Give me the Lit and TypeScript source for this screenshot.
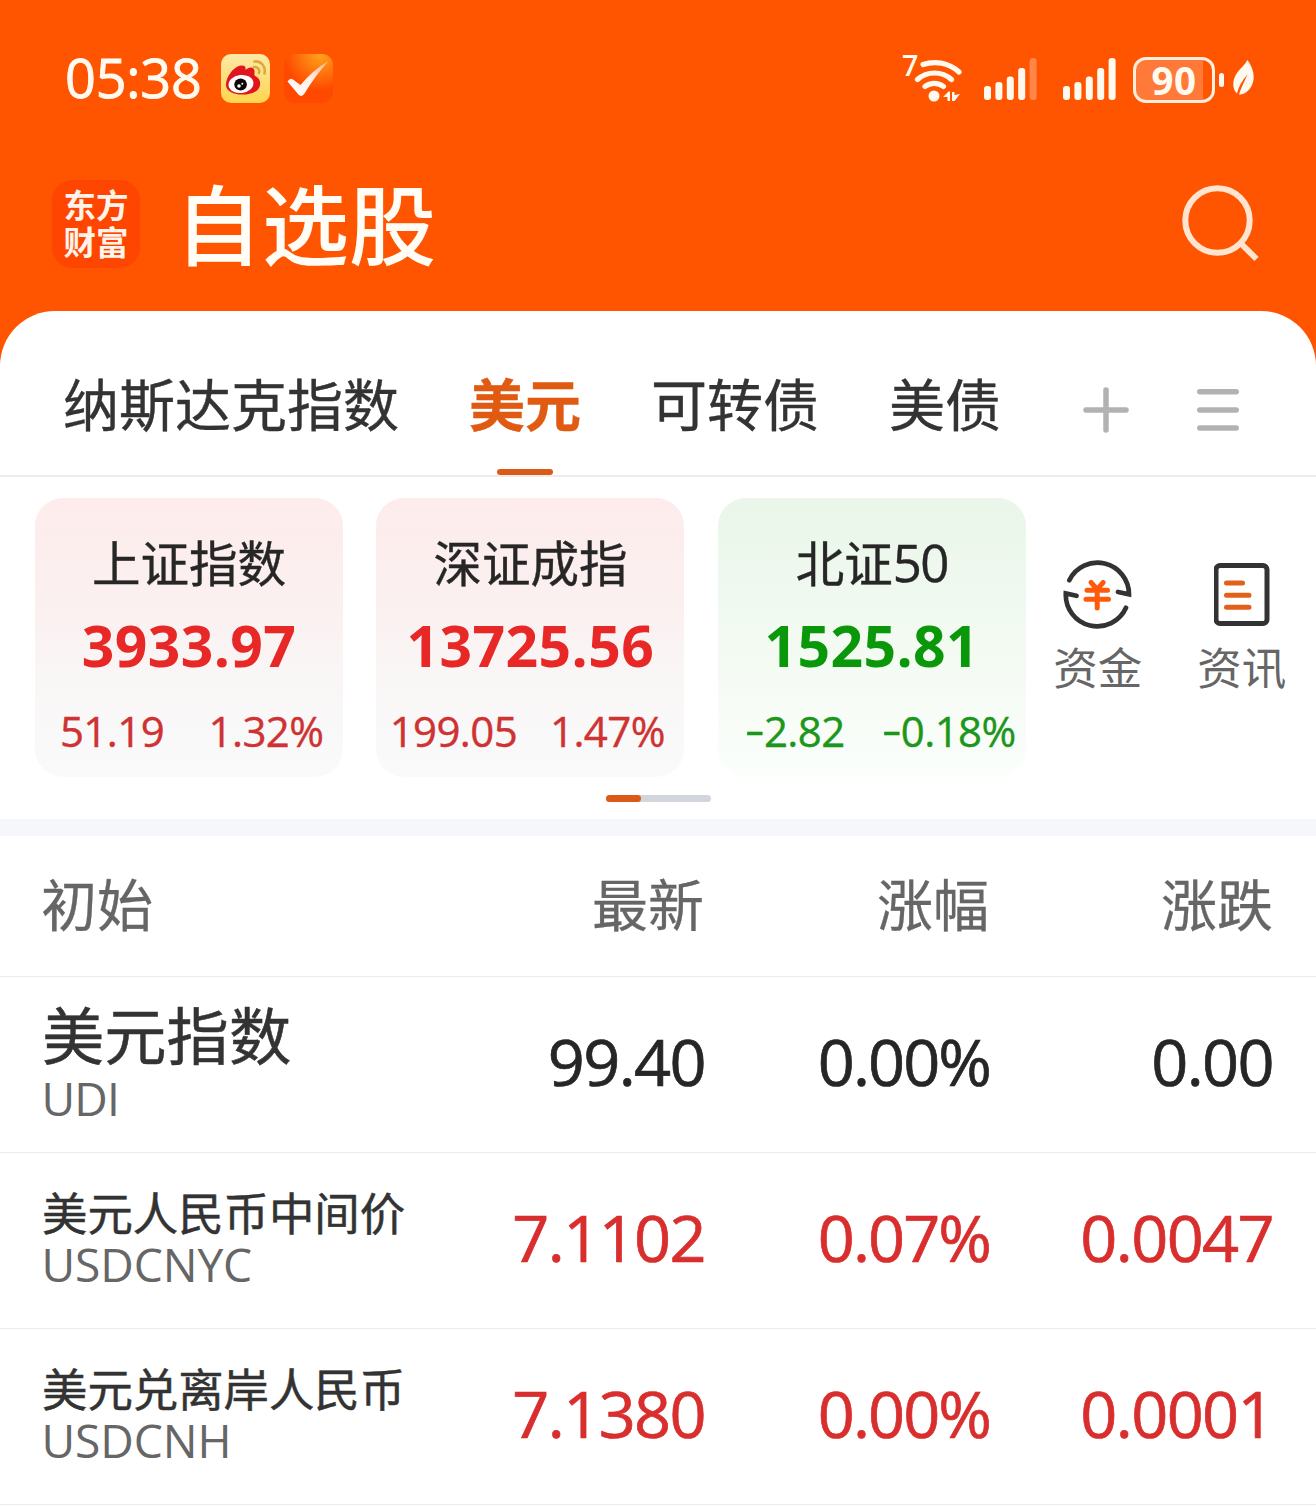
import { LitElement, html, css, svg } from "lit";
import { customElement, property } from "lit/decorators.js";
import { classMap } from "lit/directives/class-map.js";

interface IndexCard { name: string; digits?: string; value: string; change: string; percent: string; down?: boolean }
interface Quote { name: string; code: string; last: string; percent: string; change: string; up?: boolean; large?: boolean }

const TABS = ["纳斯达克指数", "美元", "可转债", "美债"];
const ACTIVE_TAB = "美元";

const CARDS: IndexCard[] = [
  { name: "上证指数", value: "3933.97", change: "51.19", percent: "1.32%" },
  { name: "深证成指", value: "13725.56", change: "199.05", percent: "1.47%" },
  { name: "北证", digits: "50", value: "1525.81", change: "-2.82", percent: "-0.18%", down: true },
];

const COLUMNS = ["初始", "最新", "涨幅", "涨跌"];

const QUOTES: Quote[] = [
  { name: "美元指数", code: "UDI", last: "99.40", percent: "0.00%", change: "0.00", large: true },
  { name: "美元人民币中间价", code: "USDCNYC", last: "7.1102", percent: "0.07%", change: "0.0047", up: true },
  { name: "美元兑离岸人民币", code: "USDCNH", last: "7.1380", percent: "0.00%", change: "0.0001", up: true },
];

const signal = (faint: boolean) => html`
  <svg width="53" height="43" viewBox="0 0 53 43" fill="#fffaf0">
    ${[29, 25, 19.5, 11, 1].map((top, i) => svg`<rect x=${i * 11.4} y=${top} width="7" height=${43 - top} rx="3" opacity=${faint && i === 4 ? 0.3 : 1}></rect>`)}
  </svg>`;

@customElement("status-bar")
export class StatusBar extends LitElement {
  static styles = css`
    :host { display: flex; align-items: center; height: 156px; padding: 0 61px 0 65px; color: #fffaf0; }
    svg { display: block; flex: none; }
    .time { width: 156px; font-size: 54px; line-height: 64px; letter-spacing: -0.2px; margin-top: -3px; -webkit-text-stroke: 0.9px; }
    .app { margin-right: 14px; }
    .space { flex: 1; }
    .wifi { margin-right: 22px; }
    .signal { margin-right: 26px; }
    .signal.second { margin-right: 17px; }
    .battery { box-sizing: border-box; width: 82px; height: 46px; border: 3.5px solid #ffeedc; border-radius: 13px; margin-top: 4px;
      background: linear-gradient(90deg, rgba(255,255,255,.22) 67px, transparent 67px); display: flex; justify-content: center; }
    .level { font-size: 38.5px; font-weight: 700; line-height: 40px; letter-spacing: 0.5px; }
    .nub { width: 5px; height: 14px; border-radius: 3px; background: #fffaf0; margin: 3px 8px 0 4px; }
  `;
  render() {
    return html`
      <span class="time">05:38</span>
      <svg class="app" width="49" height="49" viewBox="0 0 49 49">
        <defs><linearGradient id="y" x1="0" y1="0" x2="0" y2="1"><stop offset="0" stop-color="#fde9a8"></stop><stop offset="1" stop-color="#ffd44f"></stop></linearGradient></defs>
        <rect width="49" height="49" rx="10" fill="url(#y)"></rect>
        <path d="M5 31C5 23 13 12 20 11.500c4-.3 5 1.500 4.500 4.500C28 12 34 12.500 33.500 18c0 2-.3 3.500.8 4 6.500 3 6 11 1.700 14.500C27 43.500 5 41.500 5 31z" fill="#e0151d"></path>
        <ellipse cx="20" cy="30" rx="12.500" ry="9" fill="#fff" transform="rotate(-7 20 30)"></ellipse>
        <ellipse cx="19.600" cy="30.500" rx="6.300" ry="5.900" fill="#0c0606"></ellipse>
        <circle cx="18" cy="32" r="1.800" fill="#fff"></circle><circle cx="21.300" cy="29.700" r="1" fill="#fff"></circle>
        <g fill="none" stroke="#dca93c" stroke-width="2.600" stroke-linecap="round"><path d="M33.500 7.500C40 6.500 45 12.500 43.500 19.500"></path><path d="M33 13C36.500 12.500 39 15.500 38 18.800"></path></g>
      </svg>
      <svg class="app" width="49" height="49" viewBox="0 0 49 49">
        <defs>
          <radialGradient id="o" cx=".75" cy="0" r=".75"><stop offset="0" stop-color="#ffa51c"></stop><stop offset="1" stop-color="#ff4800"></stop></radialGradient>
          <linearGradient id="c" x1="1" y1="0" x2="0" y2="1"><stop offset="0" stop-color="#ffb48c"></stop><stop offset=".5" stop-color="#fff0e8"></stop><stop offset="1" stop-color="#fff"></stop></linearGradient>
        </defs>
        <rect width="49" height="49" rx="11" fill="url(#o)"></rect>
        <path d="M3.500 27.500Q6 23.500 9 25.500L16.500 31Q29 16 44.500 7 31 22 20.500 39.500 17.500 44 14 40z" fill="url(#c)"></path>
      </svg>
      <span class="space"></span>
      <svg class="wifi" width="62" height="60" viewBox="0 -3 62 60" fill="none" stroke="#fffaf0" stroke-width="5.200" stroke-linecap="round">
        <circle cx="34" cy="45" r="5.500" fill="#fffaf0" stroke="none"></circle>
        <path d="M25 35.500A15.200 15.200 0 0 1 43.500 35.500M17.500 28.500A25.500 25.500 0 0 1 51.500 28.500M23 13.500A36 36 0 0 1 59 21"></path>
        <path d="M43 46l5.500-5.500h1.500v9.500h-2.500v-4zM52 41l2.500 0 0 3 5.500-1-5.500 7h-2.500z" fill="#fffaf0" stroke="none"></path>
        <text x="2" y="25" font-size="28.500" font-weight="600" fill="#fffaf0" stroke="none">7</text>
      </svg>
      <span class="signal">${signal(true)}</span>
      <span class="signal second">${signal(false)}</span>
      <span class="battery"><span class="level">90</span></span>
      <span class="nub"></span>
      <svg width="23" height="36" viewBox="0 0 23 36" fill="#fffaf0">
        <path d="M15.500 0C21 8 24 17 19.500 26 16.500 32 11.500 34.500 7 34.500 9 28 12 22 15.500 14.500 10 20 6.500 27 5 33.500 0 29 0 20 5 13 8 8.500 13 5 15.500 0z"></path>
      </svg>`;
  }
}

@customElement("index-card")
export class IndexCardView extends LitElement {
  @property({ attribute: false }) card!: IndexCard;
  static styles = css`
    :host { display: block; flex: none; width: 308px; height: 279px; text-align: center; }
    .card { box-sizing: border-box; height: 100%; padding-top: 35px; border-radius: 28px; color: #dd2a2a;
      background: linear-gradient(180deg, #fdeceb 0%, #fbf0f0 38%, #f9f7f6 66%, #fafafb 100%); }
    .card.down { color: #149614; background: linear-gradient(180deg, #eaf6ea 0%, #f2faf1 50%, #fbfefb 100%); }
    .name { font-size: 48.5px; line-height: 60px; color: #262626; white-space: nowrap; -webkit-text-stroke: 0.4px; }
    .digits { font-size: 51px; letter-spacing: -1.6px; line-height: 1px; }
    .value { margin-top: 17px; font-size: 57px; line-height: 70px; font-weight: 700; letter-spacing: 0.4px; color: #e82727; }
    .down .value { color: #0a980a; }
    .pair { display: grid; grid-template-columns: 1fr 1fr; margin-top: 26px; font-size: 42px; line-height: 50px; letter-spacing: -0.6px; color: #cf3232; -webkit-text-stroke: 0.4px; }
    .down .pair { color: #1c961c; }
    .pair span { display: flex; justify-content: center; white-space: nowrap; }
    .minus { transform: translateY(-2px) scaleX(1.45); margin: 0 3px; font-style: normal; }
  `;
  private signed(text: string) {
    return html`<span>${text.startsWith("-") ? html`<i class="minus">-</i>${text.slice(1)}` : text}</span>`;
  }
  render() {
    const c = this.card;
    return html`
      <div class=${classMap({ card: true, down: !!c.down })}>
        <div class="name">${c.name}${c.digits ? html`<span class="digits">${c.digits}</span>` : ""}</div>
        <div class="value">${c.value}</div>
        <div class="pair">${this.signed(c.change)}${this.signed(c.percent)}</div>
      </div>`;
  }
}

@customElement("quote-row")
export class QuoteRow extends LitElement {
  @property({ attribute: false }) quote!: Quote;
  static styles = css`
    :host { display: block; }
    .row { display: grid; grid-template-columns: 406px 257px 285px 283px; height: 175px; padding-left: 42px; border-bottom: 1px solid #ebebeb; color: #262626; }
    .title { padding-top: 34px; white-space: nowrap; color: #333; }
    .name { font-size: 45.4px; line-height: 52px; -webkit-text-stroke: 0.5px; }
    .code { font-size: 46.2px; line-height: 52px; color: #666; margin-left: -0.5px; letter-spacing: -0.1px; }
    .large .title { padding-top: 23px; }
    .large .name { font-size: 62.3px; line-height: 72px; }
    .large .code { line-height: 54px; letter-spacing: -0.9px; }
    .num { font-size: 64.8px; line-height: 168px; letter-spacing: -1.6px; text-align: right; -webkit-text-stroke: 0.7px; }
    .up .num { color: #d92e2e; }
    .pct { letter-spacing: -1.9px; }
  `;
  render() {
    const q = this.quote;
    return html`
      <div class=${classMap({ row: true, up: !!q.up, large: !!q.large })}>
        <div class="title"><div class="name">${q.name}</div><div class="code">${q.code}</div></div>
        <div class="num">${q.last}</div>
        <div class="num pct">${q.percent}</div>
        <div class="num">${q.change}</div>
      </div>`;
  }
}

@customElement("app-root")
export class AppRoot extends LitElement {
  static styles = css`
    :host { display: block; width: 1316px; height: 1508px; overflow: hidden; background: #ff5500; font-family: "Open Sans", "Noto Sans CJK SC", sans-serif; }
    svg { display: block; flex: none; }
    .titlebar { display: flex; align-items: center; height: 136px; padding: 0 57px 0 52px; }
    .logo { display: flex; flex-direction: column; align-items: center; justify-content: center; width: 88px; height: 88px; border-radius: 20px; background: #ff4600;
      color: #fff3ea; font-size: 32.5px; font-weight: 700; line-height: 37px; }
    .heading { flex: 1; margin: 2px 0 0 35px; font-size: 87px; line-height: 100px; font-weight: 500; color: #fffdf5; }
    .sheet { margin-top: 19px; height: 1197px; border-radius: 55px 55px 0 0; background: #fff; }
    .tabs { display: flex; height: 164px; padding-left: 63px; border-bottom: 2px solid #ececec; gap: 70px; color: #333; font-size: 56px; }
    .tab { display: flex; flex-direction: column; align-items: center; justify-content: space-between; white-space: nowrap; line-height: 80px; padding-top: 53px; -webkit-text-stroke: 0.4px; }
    .tab.active { color: #e05a12; font-weight: 700; }
    .bar { width: 56px; height: 6px; border-radius: 3px; background: #dc5a18; }
    .tools { display: flex; gap: 68px; padding: 76px 0 0 12px; }
    .indices { display: flex; gap: 33.4px; padding: 21px 0 0 35px; }
    .shortcuts { display: flex; margin-left: -33.4px; padding-top: 61px; }
    .shortcut { display: flex; flex-direction: column; align-items: center; width: 144px; font-size: 44.5px; line-height: 60px; color: #666; }
    .shortcut svg { height: 70px; margin-bottom: 9px; }
    .pager { width: 105px; height: 7px; margin: 18px 0 17px 606px; border-radius: 4px; background: #d2d6dc; }
    .page { width: 35px; height: 7px; border-radius: 4px; background: #dc5a18; }
    .band { height: 17px; background: #f5f7fa; }
    .head { display: grid; grid-template-columns: 406px 257px 285px 284px; height: 140px; padding-left: 41px; border-bottom: 1px solid #ebebeb; font-size: 56px; line-height: 137px; color: #666; -webkit-text-stroke: 0.3px; }
    .head span + span { text-align: right; }
  `;
  render() {
    return html`
      <status-bar></status-bar>
      <div class="titlebar">
        <div class="logo"><span>东方</span><span>财富</span></div>
        <div class="heading">自选股</div>
        <svg width="78" height="78" viewBox="0 0 78 78" fill="none" stroke="#ffe4d0" stroke-width="6">
          <circle cx="36.500" cy="35.500" r="32.200"></circle><path d="M59 57.500L75.500 74"></path>
        </svg>
      </div>
      <div class="sheet">
        <div class="tabs">
          ${TABS.map((t) => html`<div class=${classMap({ tab: true, active: t === ACTIVE_TAB })}>${t}${t === ACTIVE_TAB ? html`<span class="bar"></span>` : ""}</div>`)}
          <div class="tools">
            <svg width="46" height="46" viewBox="0 0 46 46" stroke="#b2b2b2" stroke-width="5.500" stroke-linecap="round"><path d="M23 3v40M3 23h40"></path></svg>
            <svg width="42" height="46" viewBox="0 0 42 46" stroke="#b2b2b2" stroke-width="5.500" stroke-linecap="round"><path d="M2.800 4.700h36.400M2.800 23h36.400M2.800 41h36.400"></path></svg>
          </div>
        </div>
        <div class="indices">
          ${CARDS.map((c) => html`<index-card .card=${c}></index-card>`)}
          <div class="shortcuts">
            <div class="shortcut">
              <svg width="74" height="70" viewBox="1 1.500 74 70" fill="none" stroke-linecap="round">
                <path d="M9.300 22.700A31.500 31.500 0 0 1 69 36.800L58 34.500M66 50.300A31.500 31.500 0 0 1 5.800 36L16.500 38.300" stroke="#333" stroke-width="4.700"></path>
                <path d="M31 24.800L37.200 32 43.200 24.800M27 32.700H47.500M26 41.700H48.500M37.200 32V50.500" stroke="#ff5a0a" stroke-width="5"></path>
              </svg>资金
            </div>
            <div class="shortcut">
              <svg width="56" height="70" viewBox="0.500 -4 56 70" fill="none" stroke-linecap="round">
                <rect x="2.500" y="2.500" width="51" height="58" rx="4" stroke="#333" stroke-width="5"></rect>
                <path d="M13 20H29M13 32.300H35.500M13 44.300H35.500" stroke="#e2601a" stroke-width="5"></path>
              </svg>资讯
            </div>
          </div>
        </div>
        <div class="pager"><div class="page"></div></div>
        <div class="band"></div>
        <div class="head">${COLUMNS.map((c) => html`<span>${c}</span>`)}</div>
        ${QUOTES.map((q) => html`<quote-row .quote=${q}></quote-row>`)}
      </div>`;
  }
}
